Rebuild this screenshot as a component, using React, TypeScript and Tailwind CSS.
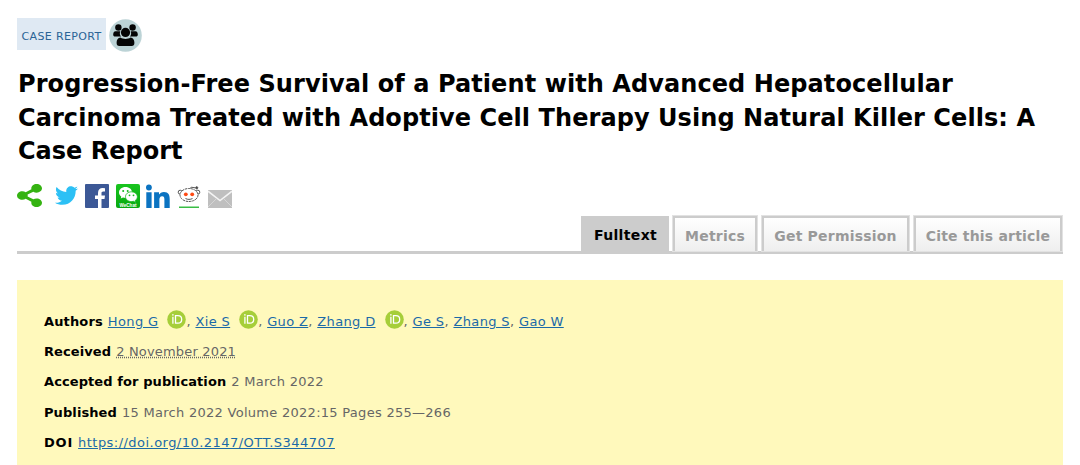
import type { ReactNode } from "react";
import { FaShareAlt, FaTwitter } from "react-icons/fa";

const TITLE_LINES = [
  { text: "Progression-Free Survival of a Patient with Advanced Hepatocellular", tracking: "tracking-[0.08px]" },
  { text: "Carcinoma Treated with Adoptive Cell Therapy Using Natural Killer Cells: A", tracking: "tracking-[0.07px]" },
  { text: "Case Report", tracking: "tracking-[0px]" },
];

const TABS = [
  { label: "Metrics", width: "w-[84px]" },
  { label: "Get Permission", width: "w-[147px]" },
  { label: "Cite this article", width: "w-[148px]" },
];

const AUTHORS = [
  { name: "Hong G", orcid: true },
  { name: "Xie S", orcid: true },
  { name: "Guo Z", orcid: false },
  { name: "Zhang D", orcid: true },
  { name: "Ge S", orcid: false },
  { name: "Zhang S", orcid: false },
  { name: "Gao W", orcid: false },
];

function PeopleIcon() {
  return (
    <svg viewBox="0 0 33 33" className="size-[33px]">
      <circle cx="16.5" cy="16.5" r="16.3" fill="#bcd3d6" />
      <g fill="#050505">
        <circle cx="9.4" cy="8.5" r="3.2" />
        <circle cx="23.6" cy="8.5" r="3.2" />
        <path d="M6.5 12.3h4.800c-.9 2-.4 4 .8 5.300H6.400c-1.500 0-2.400-1.200-2.200-2.400.2-1.600.9-2.900 2.300-2.900Z" />
        <path d="M26.500 12.300h-4.800c.9 2 .4 4-.8 5.300h5.700c1.500 0 2.400-1.200 2.200-2.400-.2-1.600-.9-2.900-2.300-2.900Z" />
        <circle cx="16.500" cy="13.400" r="4.600" />
        <path d="M11.500 18.600c1.500 1 3 1.400 5 1.400s3.500-.4 5-1.400c2.700.4 3.900 2.200 3.900 5.200 0 2.200-.9 3.300-2.700 3.300H10.300c-1.800 0-2.700-1.100-2.700-3.300 0-3 1.200-4.800 3.900-5.200Z" />
      </g>
    </svg>
  );
}

function FacebookIcon() {
  return (
    <svg viewBox="0 0 24 24" className="size-6">
      <rect width="24" height="24" rx="1" fill="#3c5896" />
      <path d="M13 24v-9h-3v-3.500h3V9c0-3.200 1.900-4.900 4.700-4.900l2.300.1v3.200h-1.700c-1.500 0-1.800.7-1.800 1.800v2.300H20l-.5 3.500h-3V24Z" fill="#fff" />
    </svg>
  );
}

function WeChatIcon() {
  return (
    <svg viewBox="0 0 24 24" className="size-6">
      <defs>
        <linearGradient id="wechat" x1="0" y1="0" x2="0" y2="1">
          <stop offset="0" stopColor="#19c51f" />
          <stop offset="1" stopColor="#08a810" />
        </linearGradient>
      </defs>
      <rect width="24" height="24" rx="2" fill="url(#wechat)" />
      <path d="M9.500 3C5.700 3 3 5.400 3 8.500c0 1.700.9 3.200 2.300 4.200l-.6 1.900 2.300-1.100 2.500.4c3.800 0 6.500-2.400 6.500-5.500S13.300 3 9.500 3Z" fill="#fff" />
      <path d="M15.500 7.800c-3.400 0-6 2.200-6 4.900s2.600 4.900 6 4.900l2-.3 2.200 1.100-.5-1.800c1.300-.9 2.200-2.300 2.200-3.900 0-2.700-2.600-4.900-5.900-4.900Z" fill="#fff" stroke="#12b819" strokeWidth=".8" />
      <g fill="#12b819">
        <circle cx="7.200" cy="7" r="1" />
        <circle cx="11.700" cy="7" r="1" />
        <circle cx="13.500" cy="11.300" r=".9" />
        <circle cx="17.500" cy="11.300" r=".9" />
      </g>
      <text x="12" y="22.700" textAnchor="middle" fontSize="4.600" fontWeight="700" letterSpacing="0" fontFamily="Liberation Sans, sans-serif" fill="#fff">
        WeChat
      </text>
    </svg>
  );
}

function LinkedInIcon() {
  return (
    <svg viewBox="0 0 24 24" className="size-6" fill="#0b73c1">
      <circle cx="2.900" cy="3.500" r="2.900" />
      <path d="M.3 8.300h5.300V24H.3ZM8.100 8.300H13v2.300c.9-1.500 2.600-2.700 5-2.700 4.500 0 5.700 2.900 5.700 7V24h-5.300v-8.100c0-2-.2-3.700-2.300-3.700-2.200 0-2.700 1.800-2.700 3.600V24H8.100Z" />
    </svg>
  );
}

function RedditIcon() {
  return (
    <svg viewBox="0 0 24 24" className="size-6">
      <g fill="#fff" stroke="#555" strokeWidth="1">
        <path d="M12.500 5.200 14.200 3.200l3.800.6" fill="none" />
        <circle cx="19.700" cy="3.800" r="1.100" fill="#444" />
        <circle cx="3.200" cy="8.200" r="2" />
        <circle cx="20.800" cy="8.200" r="2" />
        <ellipse cx="12" cy="11" rx="9" ry="6.500" strokeDasharray="2.500 .7" />
        <path d="M8.500 14.500c2.200 1.200 4.800 1.200 7 0" fill="none" />
      </g>
      <circle cx="8.800" cy="10.300" r="1.900" fill="#ff4a14" />
      <circle cx="15.200" cy="10.300" r="1.900" fill="#ff4a14" />
      <path d="M2 22.500h20V24H2Z" fill="#39bd45" />
    </svg>
  );
}

function MailIcon() {
  return (
    <svg viewBox="0 0 24 18" className="h-[18px] w-6">
      <rect width="24" height="18" fill="#bfbfbf" />
      <path d="m0 1.200 12 9.300 12-9.300" fill="none" stroke="#f4f4f4" strokeWidth="1.500" />
      <path d="m0 17 8.300-8.300M24 17l-8.300-8.300" fill="none" stroke="#d8d8d8" strokeWidth=".9" />
    </svg>
  );
}

function OrcidIcon() {
  return (
    <svg viewBox="0 0 19 19" className="-mt-[3px] ml-[9px] inline-block size-[19px] align-[-3px]">
      <circle cx="9.500" cy="9.500" r="9.300" fill="#a6ce39" />
      <circle cx="5.900" cy="4.900" r=".8" fill="#fff" />
      <path d="M5.900 6.700v7M8.500 5.700v7.500h2.300c2.500 0 3.900-1.600 3.900-3.750S13.300 5.700 10.800 5.700Z" fill="none" stroke="#fff" strokeWidth="1.300" />
    </svg>
  );
}

function Row({ label, labelClass = "tracking-[0.09px]", children }: { label: string; labelClass?: string; children: ReactNode }) {
  return (
    <p className="flex h-[30.4px] items-baseline whitespace-pre">
      <strong className={`font-bold text-black ${labelClass}`}>{label}</strong>
      <span className="ml-[5px]">{children}</span>
    </p>
  );
}

export default function App() {
  return (
    <div className="h-[465px] overflow-hidden bg-white px-[17px] font-['DejaVu_Sans',Verdana,sans-serif] text-[13px] tracking-[0.28px] text-[#666]">
      <div className="flex items-start gap-[3px] pt-[18px]">
        <span className="flex h-8 w-[89px] items-center justify-center bg-[#dfe9f3] pt-[6px] text-[11px] tracking-[0.36px] whitespace-nowrap text-[#2a6496]">
          CASE REPORT
        </span>
        <span className="pt-[1px]">
          <PeopleIcon />
        </span>
      </div>

      <h1 className="mt-[16px] pl-[1px] text-[24px] leading-[33.5px] font-bold whitespace-nowrap text-black">
        {TITLE_LINES.map((line) => (
          <span key={line.text} className={`block w-fit ${line.tracking}`}>
            {line.text}
          </span>
        ))}
      </h1>

      <div className="mt-[15px] flex h-[25px] items-center">
        <FaShareAlt className="-mt-[2px] h-[23px] w-[25px] text-[#35b312]" preserveAspectRatio="none" />
        <FaTwitter className="-mt-[2px] ml-[13px] size-[23px] text-[#2cc0f5]" />
        <span className="ml-[7px]"><FacebookIcon /></span>
        <span className="ml-[7px]"><WeChatIcon /></span>
        <span className="ml-[6px]"><LinkedInIcon /></span>
        <span className="ml-[7px]"><RedditIcon /></span>
        <span className="mt-[5px] ml-[7px]"><MailIcon /></span>
      </div>

      <div className="mt-[7px] flex h-[38px] w-[1046px] items-start justify-end gap-[5px] border-b-[3px] border-[#ccc] pr-[1px] text-[14px] font-bold tracking-[0.2px] whitespace-nowrap">
        <span className="-mr-px flex h-[35px] w-[88px] items-center justify-center bg-[#ccc] pt-[5px] pl-[1px] tracking-[0.35px] text-black">Fulltext</span>
        {TABS.map((tab) => (
          <span
            key={tab.label}
            className={`flex h-[35px] items-center justify-center border-2 border-b-0 border-[#ccc] bg-linear-to-b from-white to-[#eee] pt-[4px] text-[#999] shadow-[0_0_0_1px_#e2e2e2] ${tab.width}`}
          >
            {tab.label}
          </span>
        ))}
      </div>

      <div className="mt-[26px] h-[185px] w-[1046px] bg-[#fff9bc] pt-[32px] pl-[27px]">
        <Row label="Authors" labelClass="tracking-[0.14px]">
          {AUTHORS.map((author, i) => (
            <span key={author.name} className="tracking-[0.36px]">
              {i > 0 && ", "}
              <a className="text-[#1b6aa8] underline">{author.name}</a>
              {author.orcid && <OrcidIcon />}
            </span>
          ))}
        </Row>
        <Row label="Received">
          <span className="tracking-[0.18px] underline decoration-dotted">2 November 2021</span>
        </Row>
        <Row label="Accepted for publication">2 March 2022</Row>
        <Row label="Published">15 March 2022 Volume 2022:15 Pages 255—266</Row>
        <Row label="DOI" labelClass="tracking-[0.8px]">
          <a className="tracking-[0.46px] text-[#1b6aa8] underline">https://doi.org/10.2147/OTT.S344707</a>
        </Row>
      </div>
    </div>
  );
}
